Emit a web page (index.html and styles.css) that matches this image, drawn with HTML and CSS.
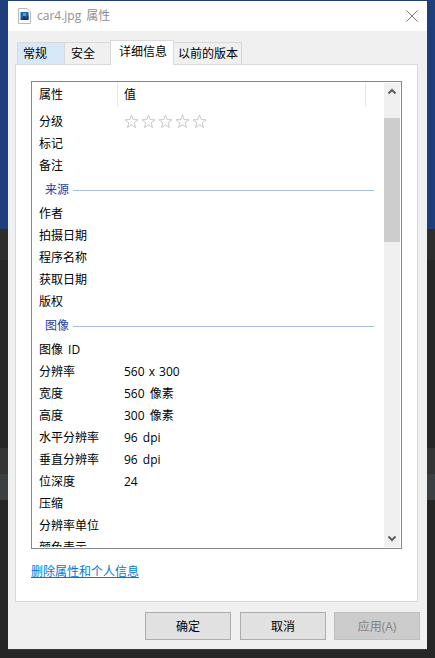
FILE: index.html
```html
<!DOCTYPE html>
<html lang="zh">
<head>
<meta charset="utf-8">
<title>car4.jpg 属性</title>
<link rel="stylesheet" href="styles.css">
</head>
<body>
<svg width="0" height="0" class="defs"><defs>
<symbol id="star" viewBox="0 0 15 15"><path d="M7.5 1 9.2 5.6 14 5.8 10.2 8.8 11.5 13.6 7.5 10.8 3.5 13.6 4.8 8.8 1 5.8 5.8 5.6Z" fill="#fff" stroke="#c8c8c8" stroke-width="1"/></symbol>
</defs></svg>
<div class="dialog">
  <header class="titlebar">
    <svg class="file-icon" width="13" height="16" viewBox="0 0 13 16"><path d="M.5.5H9L12.5 4V15.5H.5Z" fill="#fafafa" stroke="#b9b9b9"/><rect x="2.500" y="4" width="8" height="8" fill="#1a63a8"/><path d="M2.500 12 6 7.500 8 9.500 10.500 7V12Z" fill="#0d3f78"/><rect x="5" y="5" width="3" height="3" fill="#4ba3e3"/></svg>
    <span class="title">car4.jpg 属性</span>
    <svg class="close" width="12" height="12" viewBox="0 0 12 12"><path d="M.5.5 11.500 11.500M11.500.5 .5 11.500" stroke="#7a7a7a" stroke-width="1" fill="none"/></svg>
  </header>
  <main class="body">
    <nav class="tabs">
      <span class="tab hover">常规</span>
      <span class="tab t2">安全</span>
      <span class="tab active">详细信息</span>
      <span class="tab t4">以前的版本</span>
    </nav>
    <section class="panel">
      <div class="listbox">
        <div class="list">
          <div class="head"><span class="hc1">属性</span><span class="hc2">值</span><span class="hc3"></span></div>
          <div class="rows">
            <div class="row"><span class="k">分级</span><span class="stars"><svg class="star"><use href="#star"/></svg><svg class="star"><use href="#star"/></svg><svg class="star"><use href="#star"/></svg><svg class="star"><use href="#star"/></svg><svg class="star"><use href="#star"/></svg></span></div>
            <div class="row"><span class="k">标记</span></div>
            <div class="row"><span class="k">备注</span></div>
            <div class="group"><span>来源</span><i></i></div>
            <div class="row"><span class="k">作者</span></div>
            <div class="row"><span class="k">拍摄日期</span></div>
            <div class="row"><span class="k">程序名称</span></div>
            <div class="row"><span class="k">获取日期</span></div>
            <div class="row"><span class="k">版权</span></div>
            <div class="group"><span>图像</span><i></i></div>
            <div class="row"><span class="k">图像 ID</span></div>
            <div class="row"><span class="k">分辨率</span><span class="dim">560 x 300</span></div>
            <div class="row"><span class="k">宽度</span><span>560 像素</span></div>
            <div class="row"><span class="k">高度</span><span>300 像素</span></div>
            <div class="row"><span class="k">水平分辨率</span><span>96 dpi</span></div>
            <div class="row"><span class="k">垂直分辨率</span><span>96 dpi</span></div>
            <div class="row"><span class="k">位深度</span><span>24</span></div>
            <div class="row"><span class="k">压缩</span></div>
            <div class="row"><span class="k">分辨率单位</span></div>
            <div class="row"><span class="k">颜色表示</span></div>
          </div>
        </div>
        <div class="scrollbar">
          <svg class="arrow" width="16" height="17" viewBox="0 0 16 17"><path d="M4.500 10.500 8 7 11.500 10.500" fill="none" stroke="#606060" stroke-width="2"/></svg>
          <div class="track"><div class="thumb"></div></div>
          <svg class="arrow" width="16" height="17" viewBox="0 0 16 17"><path d="M4.500 6.500 8 10 11.500 6.500" fill="none" stroke="#606060" stroke-width="2"/></svg>
        </div>
      </div>
      <a class="link" href="#">删除属性和个人信息</a>
    </section>
    <footer class="buttons">
      <button class="btn">确定</button>
      <button class="btn">取消</button>
      <button class="btn off">应用(A)</button>
    </footer>
  </main>
</div>
</body>
</html>
```
FILE: styles.css
```css
* { box-sizing: border-box; }
html, body { margin: 0; height: 658px; overflow: hidden; }
body {
  padding: 1px 8px 7px 8px;
  font: 12px/22px "Open Sans", "Noto Sans CJK SC", sans-serif;
  word-spacing: 2px;
  color: #000;
  background: linear-gradient(#1e3f7c 0 229px, #2d2d2d 229px 260px, #262626 260px 448px, #343434 448px 474px, #3a3f42 474px 500px, #262626 500px);
}
.defs { position: absolute; }
.dialog { height: 649px; display: flex; flex-direction: column; border-bottom: 1px solid #3c3c3c; }
.titlebar { height: 30px; flex: none; background: #fff; display: flex; align-items: center; padding: 0 9px 0 10px; }
.file-icon { flex: none; margin-top: -1px; }
.title { margin-left: 6px; color: #8f8f8f; font-size: 12px; flex: 1; margin-top: -1px; }
.close { flex: none; margin-top: -1px; }
.body { flex: 1; background: #f0f0f0; padding: 9px 10px 0 7px; display: flex; flex-direction: column; }
.tabs { display: flex; height: 24px; align-items: flex-end; padding-left: 2px; position: relative; z-index: 1; flex: none; }
.tab { height: 22px; border: 1px solid #d9d9d9; border-bottom: 0; line-height: 22px; background: #f0f0f0; flex: none; }
.hover { width: 48px; background: #d8e8f8; padding-left: 5px; }
.t2 { width: 47px; margin-left: -1px; padding-left: 6px; }
.active { width: 64px; height: 25px; margin-left: -1px; margin-bottom: -1px; background: #fff; line-height: 22px; padding-left: 8px; }
.t4 { width: 69px; margin-left: -1px; padding-left: 4px; }
.panel { flex: none; height: 538px; margin-right: -1px; background: #fff; border: 1px solid #d9d9d9; padding: 16px 15px 0 15px; display: flex; flex-direction: column; }
.listbox { height: 468px; flex: none; display: flex; border: 1px solid #828790; padding: 1px; background: #fff; }
.list { flex: 1; min-width: 0; overflow: hidden; }
.head { height: 24px; display: flex; }
.head span { display: block; height: 24px; line-height: 24px; }
.hc1 { width: 85px; padding-left: 6px; border-right: 1px solid #e5e5e5; }
.hc2 { width: 248px; padding-left: 6px; border-right: 1px solid #e5e5e5; }
.rows { padding-top: 4px; }
.row { height: 22px; display: flex; white-space: nowrap; }
.k { width: 85px; padding-left: 6px; flex: none; margin-right: 6px; }
.dim { word-spacing: 1px; }
.stars { display: flex; align-items: center; gap: 2px; margin-top: -2px; }
.star { width: 15px; height: 15px; display: block; }
.group { height: 26px; display: flex; align-items: center; color: #1a3fa8; padding: 0 10px 0 12px; }
.group i { flex: 1; height: 1px; background: #a9bde4; margin-left: 4px; }
.scrollbar { width: 16px; flex: none; background: #f0f0f0; display: flex; flex-direction: column; }
.arrow { flex: none; display: block; }
.track { flex: 1; }
.thumb { height: 124px; margin-top: 18px; background: #cdcdcd; }
.link { margin-top: 12px; color: #0078d7; text-decoration: underline; }
.buttons { display: flex; justify-content: flex-end; gap: 9px; padding-top: 10px; margin-right: -3px; }
.btn { width: 86px; height: 28px; border: 1px solid #adadad; background: #e1e1e1; font: inherit; word-spacing: inherit; line-height: 20px; padding: 1px 0 0; color: #000; }
.off { background: #cccccc; border-color: #bfbfbf; color: #838383; margin-left: -1px; }
```
